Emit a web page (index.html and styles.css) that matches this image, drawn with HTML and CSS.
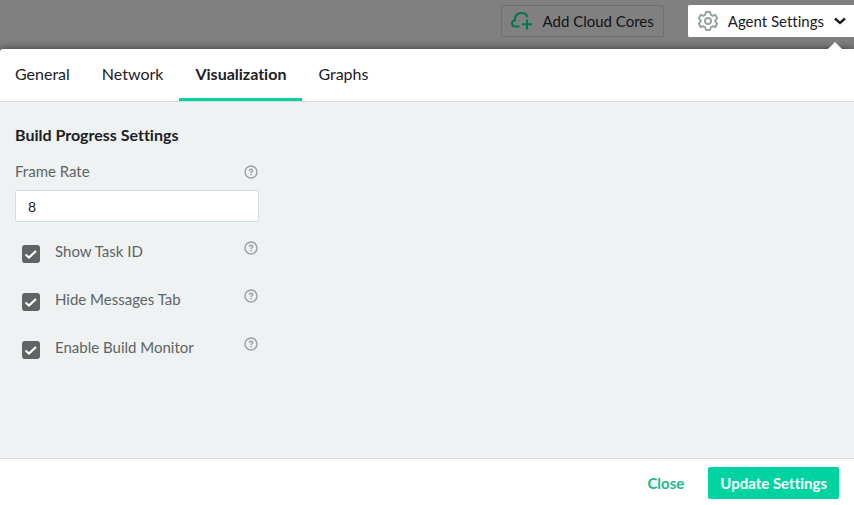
FILE: index.html
```html
<!DOCTYPE html>
<html lang="en">
<head>
<meta charset="utf-8">
<title>Agent Settings</title>
<link rel="stylesheet" href="styles.css">
</head>
<body>
<header class="topbar">
  <button class="bar-button cloud" type="button">
    <svg class="bar-icon" viewBox="0 0 22 20" fill="none" stroke="currentColor" stroke-width="2" aria-hidden="true"><path d="M8.500 15.500H4.800C2.500 15.500 1 14.200 1 12.300C1 10.600 2.200 9.500 4 9.200C3.400 5 6.300 2 10.300 2C13.500 2 15.800 3.600 16.500 6.200M16 8.500V18.500M11 13.300H21"/></svg>
    <span>Add Cloud Cores</span>
  </button>
  <button class="bar-button agent" type="button" aria-expanded="true">
    <svg class="bar-icon" viewBox="0 0 20 20" fill="none" stroke="currentColor" stroke-width="2" stroke-linejoin="round" aria-hidden="true"><path d="M8 1H12L12.700 3.600L14.800 4.800L17.400 4L19.200 7.400L17.500 9.200V10.800L19.200 12.600L17.400 16L14.800 15.200L12.700 16.400L12 19H8L7.300 16.400L5.200 15.200L2.600 16L0.800 12.600L2.500 10.800V9.200L0.800 7.400L2.600 4L5.200 4.800L7.300 3.600Z"/><circle cx="10" cy="10" r="3"/></svg>
    <span>Agent Settings</span>
    <svg class="chevron" viewBox="0 0 12 8" fill="none" stroke="currentColor" stroke-width="2.400" aria-hidden="true"><path d="M1 1.500L6 6L11 1.500"/></svg>
  </button>
</header>
<main class="panel">
  <nav class="tabs">
    <a class="tab" href="#general">General</a>
    <a class="tab" href="#network">Network</a>
    <a class="tab active" href="#visualization" aria-current="page">Visualization</a>
    <a class="tab" href="#graphs">Graphs</a>
  </nav>
  <form class="settings" id="settings">
    <h2>Build Progress Settings</h2>
    <div class="field-head">
      <label for="rate">Frame Rate</label>
      <svg class="help" viewBox="0 0 14 14" fill="none" stroke="currentColor" aria-hidden="true"><circle cx="7" cy="7" r="6" stroke-width="1.400"/><path d="M5.400 5.700C5.400 3.700 8.600 3.700 8.600 5.600C8.600 6.700 7 6.700 7 8M7 9V10.200" stroke-width="1.500"/></svg>
    </div>
    <input class="text" id="rate" type="text" value="8">
    <div class="option">
      <input class="check" id="task" type="checkbox" checked>
      <label for="task">Show Task ID</label>
      <svg class="help" viewBox="0 0 14 14" fill="none" stroke="currentColor" aria-hidden="true"><circle cx="7" cy="7" r="6" stroke-width="1.400"/><path d="M5.400 5.700C5.400 3.700 8.600 3.700 8.600 5.600C8.600 6.700 7 6.700 7 8M7 9V10.200" stroke-width="1.500"/></svg>
    </div>
    <div class="option">
      <input class="check" id="messages" type="checkbox" checked>
      <label for="messages">Hide Messages Tab</label>
      <svg class="help" viewBox="0 0 14 14" fill="none" stroke="currentColor" aria-hidden="true"><circle cx="7" cy="7" r="6" stroke-width="1.400"/><path d="M5.400 5.700C5.400 3.700 8.600 3.700 8.600 5.600C8.600 6.700 7 6.700 7 8M7 9V10.200" stroke-width="1.500"/></svg>
    </div>
    <div class="option">
      <input class="check" id="monitor" type="checkbox" checked>
      <label for="monitor">Enable Build Monitor</label>
      <svg class="help" viewBox="0 0 14 14" fill="none" stroke="currentColor" aria-hidden="true"><circle cx="7" cy="7" r="6" stroke-width="1.400"/><path d="M5.400 5.700C5.400 3.700 8.600 3.700 8.600 5.600C8.600 6.700 7 6.700 7 8M7 9V10.200" stroke-width="1.500"/></svg>
    </div>
  </form>
  <footer class="actions">
    <button class="close" type="button">Close</button>
    <button class="update" type="submit" form="settings">Update Settings</button>
  </footer>
</main>
</body>
</html>
```
FILE: styles.css
```css
* { box-sizing: border-box; }
body {
  margin: 0;
  min-height: 100vh;
  display: flex;
  flex-direction: column;
  background: #808080;
  color: #1c2023;
  font: 15px/20px Lato, sans-serif;
  font-variant-ligatures: none;
}
button, input { font: inherit; font-variant-ligatures: none; color: inherit; }
.topbar {
  display: flex;
  justify-content: flex-end;
  gap: 24px;
  padding: 5px 0 12px;
}
.bar-button {
  display: flex;
  align-items: center;
  gap: 10px;
  height: 32px;
  padding: 0 9px;
  border: 1px solid #6b7071;
  border-radius: 2px;
  background: transparent;
}
.bar-icon { width: 22px; height: 20px; }
.cloud .bar-icon { color: #007652; }
.cloud { color: #101214; }
.agent {
  position: relative;
  padding-right: 8px;
  border-color: #fff;
  border-right: 0;
  border-radius: 2px 0 0 2px;
  background: #fff;
}
.agent::after {
  content: "";
  position: absolute;
  right: 12px;
  bottom: -13px;
  z-index: 1;
  border: 7px solid transparent;
  border-top: 0;
  border-bottom-color: #fff;
}
.agent .bar-icon { width: 20px; color: #98a3a3; }
.chevron { width: 12px; height: 8px; }
.panel {
  flex: 1;
  display: flex;
  flex-direction: column;
  border-radius: 3px 0 0 0;
  background: #fff;
  box-shadow: 0 0 8px rgba(0, 0, 0, 0.6);
}
.tabs {
  display: flex;
  height: 53px;
  margin-left: -1px;
  border-bottom: 1px solid #d5dadd;
  font-size: 16px;
}
.tab {
  padding: 15px 16px 14px;
  border-bottom: 3px solid transparent;
  color: inherit;
  text-decoration: none;
}
.active { border-color: #00d3a2; font-weight: 700; }
.settings {
  flex: 1;
  padding: 23px 15px;
  background: #eef2f3;
  color: #5f6465;
}
h2 {
  margin: 0 0 16px;
  color: #1c2023;
  font-size: 16px;
  line-height: 20px;
}
.field-head, .option {
  display: flex;
  width: 244px;
}
.field-head {
  align-items: flex-end;
  justify-content: space-between;
  padding-right: 1px;
  margin-bottom: 9px;
}
.field-head .help { margin-bottom: 2px; }
.help { width: 14px; height: 14px; color: #98a1a2; }
.text {
  display: block;
  width: 244px;
  height: 32px;
  margin-bottom: 19px;
  padding: 0 12px;
  border: 1px solid #d3dde1;
  border-radius: 2px;
  background: #fff;
  color: #1c2023;
  font-size: 14px;
}
.option {
  align-items: flex-start;
  height: 20px;
  padding: 0 1px 0 7px;
  margin-bottom: 28px;
}
.option label { flex: 1; }
.check {
  appearance: none;
  width: 18px;
  height: 18px;
  margin: 4px 15px 0 0;
  border-radius: 3px;
  background: #5f6465 url("data:image/svg+xml,%3Csvg xmlns='http://www.w3.org/2000/svg' viewBox='0 0 18 18'%3E%3Cpath d='M3.500 9.500L7 12.500L14 6' fill='none' stroke='white' stroke-width='2.200'/%3E%3C/svg%3E");
}
.actions {
  display: flex;
  justify-content: flex-end;
  padding: 8px 15px 6px;
  border-top: 1px solid #d5dadd;
  font-weight: 700;
}
.actions button {
  height: 32px;
  padding: 0 12px;
  border: 0;
  border-radius: 2px;
}
.actions .close { margin-right: 12px; background: transparent; color: #20b88f; }
.actions .update { background: #00d3a2; color: #fff; }
```
